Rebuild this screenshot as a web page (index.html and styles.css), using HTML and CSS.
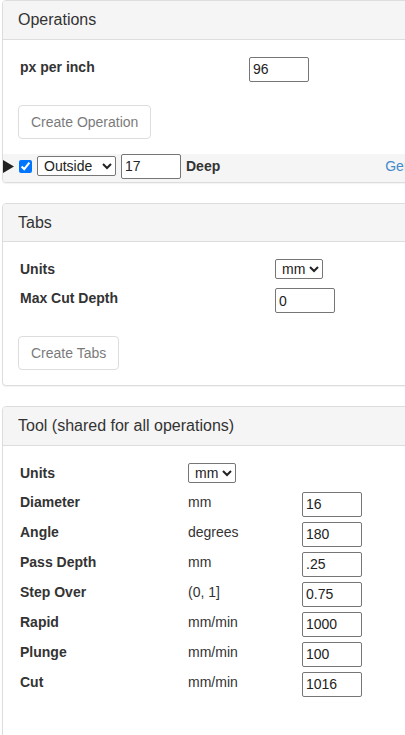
FILE: index.html
```html
<!DOCTYPE html>
<html>
<head>
<meta charset="utf-8">
<link rel="stylesheet" href="styles.css">
</head>
<body>
<div class="page">
  <div class="panel">
    <div class="panel-heading">Operations</div>
    <div class="panel-body">
      <div class="form form-ops">
        <div class="lbl">px per inch</div>
        <div><input class="num" type="text" value="96"></div>
      </div>
      <button class="btn" disabled>Create Operation</button>
    </div>
    <div class="op-row">
      <svg class="tri" width="11" height="13" viewBox="0 0 11 13"><polygon points="0,0 11,6.5 0,13" fill="#222"/></svg>
      <input class="chk" type="checkbox" checked>
      <select class="sel sel-op"><option>Outside</option></select>
      <input class="num" type="text" value="17">
      <span class="lbl deep">Deep</span>
      <a class="gen" href="#">Generate</a>
    </div>
  </div>

  <div class="panel">
    <div class="panel-heading">Tabs</div>
    <div class="panel-body">
      <div class="form form-tabs">
        <div class="lbl row-sel">Units</div>
        <div class="row-sel"><select class="sel sel-mm"><option>mm</option></select></div>
        <div class="lbl">Max Cut Depth</div>
        <div><input class="num" type="text" value="0"></div>
      </div>
      <button class="btn" disabled>Create Tabs</button>
    </div>
  </div>

  <div class="panel panel-tool">
    <div class="panel-heading">Tool (shared for all operations)</div>
    <div class="panel-body">
      <div class="form form-tool">
        <div class="lbl row-sel">Units</div>
        <div class="row-sel"><select class="sel sel-mm"><option>mm</option></select></div>
        <div class="row-sel"></div>
        <div class="lbl">Diameter</div><div class="unit">mm</div><div><input class="num" type="text" value="16"></div>
        <div class="lbl">Angle</div><div class="unit">degrees</div><div><input class="num" type="text" value="180"></div>
        <div class="lbl">Pass Depth</div><div class="unit">mm</div><div><input class="num" type="text" value=".25"></div>
        <div class="lbl">Step Over</div><div class="unit">(0, 1]</div><div><input class="num" type="text" value="0.75"></div>
        <div class="lbl">Rapid</div><div class="unit">mm/min</div><div><input class="num" type="text" value="1000"></div>
        <div class="lbl">Plunge</div><div class="unit">mm/min</div><div><input class="num" type="text" value="100"></div>
        <div class="lbl">Cut</div><div class="unit">mm/min</div><div><input class="num" type="text" value="1016"></div>
      </div>
    </div>
  </div>
</div>
</body>
</html>
```
FILE: styles.css
```css
html, body {
  margin: 0;
  padding: 0;
  overflow: hidden;
  background: #fff;
}
body {
  font-family: "Liberation Sans", Arial, sans-serif;
  font-size: 14px;
  line-height: 20px;
  color: #333;
}
.page {
  width: 405px;
  height: 735px;
  overflow: hidden;
  padding-left: 2px;
  box-sizing: border-box;
}
.panel {
  width: 440px;
  border: 1px solid #ddd;
  border-radius: 4px;
  background: #fff;
  box-shadow: 0 1px 1px rgba(0,0,0,0.05);
  margin-bottom: 20px;
}
.panel-heading {
  background: #f5f5f5;
  border-bottom: 1px solid #ddd;
  border-radius: 3px 3px 0 0;
  padding: 10px 15px;
  font-size: 16px;
  line-height: 17.6px;
  color: #333;
}
.panel-body {
  padding: 15px;
}
.panel-tool .panel-body {
  height: 400px;
}
.form {
  display: grid;
  row-gap: 5px;
  margin-top: 2px;
  margin-bottom: 23px;
  align-items: start;
}
.form-ops { grid-template-columns: 231px auto; }
.form-tabs { grid-template-columns: 257px auto; }
.form-tool { grid-template-columns: 170px 114px auto; }
.form .lbl { padding-left: 2px; }
.row-sel { height: 24px; }
.lbl {
  font-weight: bold;
}
.unit {
  color: #333;
}
.num {
  display: block;
  box-sizing: border-box;
  width: 60px;
  height: 25px;
  margin: 0;
  padding: 0 3px;
  border: 1px solid #767676;
  border-radius: 2px;
  font-family: "Liberation Sans", Arial, sans-serif;
  font-size: 14px;
  color: #222;
  background: #fff;
}
.sel {
  box-sizing: border-box;
  height: 20px;
  margin: 0;
  font-family: "Liberation Sans", Arial, sans-serif;
  font-size: 14px;
  color: #222;
  border: 1px solid #767676;
  border-radius: 2px;
  background: #fff;
  padding: 0 0 0 2px;
}
.sel-mm { width: 48px; }
.sel-op { width: 79px; }
.btn {
  display: block;
  box-sizing: border-box;
  height: 34px;
  padding: 6px 12px;
  font-family: "Liberation Sans", Arial, sans-serif;
  font-size: 14px;
  line-height: 20px;
  color: #333;
  background: #fff;
  border: 1px solid #ccc;
  border-radius: 4px;
  opacity: 0.65;
  margin: 0;
}
.op-row {
  display: flex;
  align-items: center;
  height: 25px;
  padding-bottom: 3px;
  background: #f5f5f5;
  border-radius: 0 0 3px 3px;
}
.tri {
  flex: none;
}
.chk {
  flex: none;
  width: 13px;
  height: 13px;
  margin: 0 0 0 5px;
  accent-color: #0075ff;
}
.sel-op { flex: none; margin-left: 5px; }
.op-row .num { flex: none; margin-left: 5px; }
.deep { margin-left: 5px; }
.gen {
  margin-left: 165px;
  color: #428bca;
  text-decoration: none;
  white-space: nowrap;
}
```
